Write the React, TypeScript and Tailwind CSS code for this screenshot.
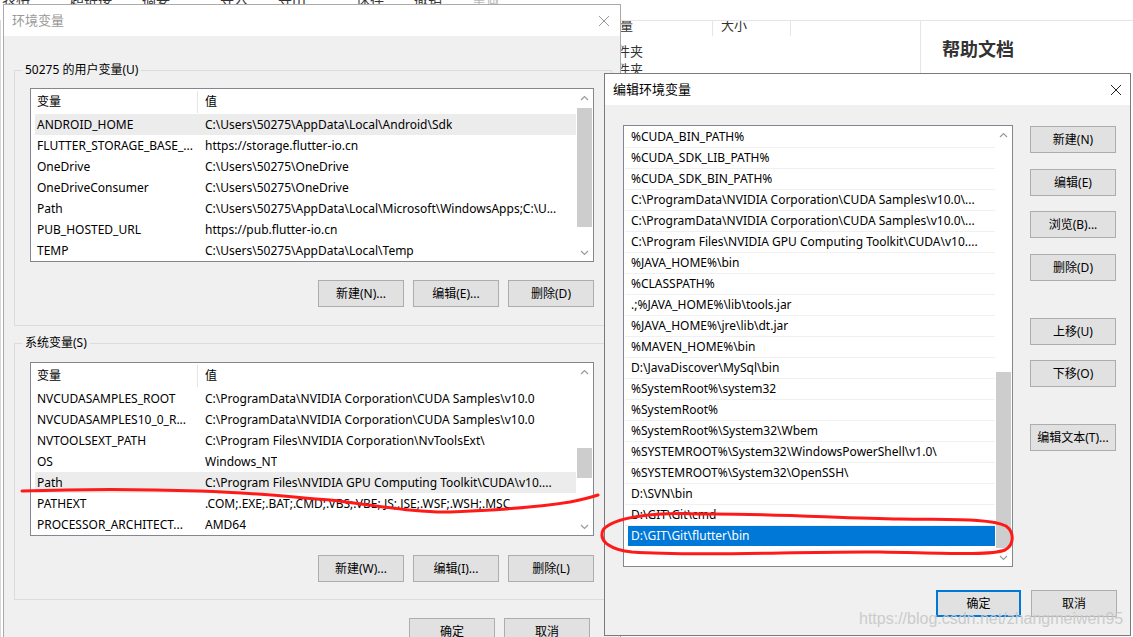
import React from "react";

const userVars: [string, string][] = [
  ["ANDROID_HOME", "C:\\Users\\50275\\AppData\\Local\\Android\\Sdk"],
  ["FLUTTER_STORAGE_BASE_...", "https://storage.flutter-io.cn"],
  ["OneDrive", "C:\\Users\\50275\\OneDrive"],
  ["OneDriveConsumer", "C:\\Users\\50275\\OneDrive"],
  ["Path", "C:\\Users\\50275\\AppData\\Local\\Microsoft\\WindowsApps;C:\\U..."],
  ["PUB_HOSTED_URL", "https://pub.flutter-io.cn"],
  ["TEMP", "C:\\Users\\50275\\AppData\\Local\\Temp"],
];

const sysVars: [string, string][] = [
  ["NVCUDASAMPLES_ROOT", "C:\\ProgramData\\NVIDIA Corporation\\CUDA Samples\\v10.0"],
  ["NVCUDASAMPLES10_0_R...", "C:\\ProgramData\\NVIDIA Corporation\\CUDA Samples\\v10.0"],
  ["NVTOOLSEXT_PATH", "C:\\Program Files\\NVIDIA Corporation\\NvToolsExt\\"],
  ["OS", "Windows_NT"],
  ["Path", "C:\\Program Files\\NVIDIA GPU Computing Toolkit\\CUDA\\v10...."],
  ["PATHEXT", ".COM;.EXE;.BAT;.CMD;.VBS;.VBE;.JS;.JSE;.WSF;.WSH;.MSC"],
  ["PROCESSOR_ARCHITECT...", "AMD64"],
];

const paths = [
  "%CUDA_BIN_PATH%",
  "%CUDA_SDK_LIB_PATH%",
  "%CUDA_SDK_BIN_PATH%",
  "C:\\ProgramData\\NVIDIA Corporation\\CUDA Samples\\v10.0\\...",
  "C:\\ProgramData\\NVIDIA Corporation\\CUDA Samples\\v10.0\\...",
  "C:\\Program Files\\NVIDIA GPU Computing Toolkit\\CUDA\\v10....",
  "%JAVA_HOME%\\bin",
  "%CLASSPATH%",
  ".;%JAVA_HOME%\\lib\\tools.jar",
  "%JAVA_HOME%\\jre\\lib\\dt.jar",
  "%MAVEN_HOME%\\bin",
  "D:\\JavaDiscover\\MySql\\bin",
  "%SystemRoot%\\system32",
  "%SystemRoot%",
  "%SystemRoot%\\System32\\Wbem",
  "%SYSTEMROOT%\\System32\\WindowsPowerShell\\v1.0\\",
  "%SYSTEMROOT%\\System32\\OpenSSH\\",
  "D:\\SVN\\bin",
  "D:\\GIT\\Git\\cmd",
  "D:\\GIT\\Git\\flutter\\bin",
];

function Chevron({ up }: { up?: boolean }) {
  return (
    <svg width="9" height="6" viewBox="0 0 9 6">
      <polyline
        points={up ? "1,5 4.5,1.5 8,5" : "1,1 4.5,4.5 8,1"}
        fill="none"
        stroke="#9a9a9a"
        strokeWidth="1.2"
      />
    </svg>
  );
}

function Scroll({ gap, thumb }: { gap: string; thumb: string }) {
  return (
    <div className="flex w-[17px] flex-col bg-white">
      <div className="flex h-[17px] items-center justify-center">
        <Chevron up />
      </div>
      <div className="flex flex-1 flex-col px-[1px]">
        <div className={gap} />
        <div className={thumb} />
      </div>
      <div className="flex h-[17px] items-center justify-center">
        <Chevron />
      </div>
    </div>
  );
}

function CloseX({ color }: { color: string }) {
  return (
    <svg width="12" height="12" viewBox="0 0 12 12">
      <path d="M1 1 L11 11 M11 1 L1 11" stroke={color} strokeWidth="1" fill="none" />
    </svg>
  );
}

function Btn({ label, focused }: { label: string; focused?: boolean }) {
  return (
    <div
      className={
        focused
          ? "flex h-[27px] w-[85px] items-center justify-center border-2 border-[#0078d7] bg-[#e1e1e1] text-[12px] text-black"
          : "flex h-[27px] w-[86px] items-center justify-center border border-[#adadad] bg-[#e1e1e1] text-[12px] text-black"
      }
    >
      {label}
    </div>
  );
}

function VarList({
  rows,
  sel,
  gap,
  thumb,
}: {
  rows: [string, string][];
  sel: number;
  gap: string;
  thumb: string;
}) {
  return (
    <div className="flex h-[174px] w-[564px] border border-[#828790] bg-white text-[12px] text-black">
      <div className="flex min-w-0 flex-1 flex-col">
        <div className="flex h-[25px] items-center">
          <div className="flex h-[22px] w-[167px] items-center border-r border-[#e5e5e5] pl-[6px]">
            变量
          </div>
          <div className="pl-[7px]">值</div>
        </div>
        {rows.map(([k, v], i) => (
          <div
            key={i}
            className={
              i === sel
                ? "ml-[4px] flex h-[21px] items-center bg-[#ececec]"
                : "ml-[4px] flex h-[21px] items-center"
            }
          >
            <div className="w-[163px] shrink-0 overflow-hidden whitespace-nowrap pl-[2px]">{k}</div>
            <div className="overflow-hidden whitespace-nowrap pl-[7px]">{v}</div>
          </div>
        ))}
      </div>
      <Scroll gap={gap} thumb={thumb} />
    </div>
  );
}

function GroupBox({ legend, children, h }: { legend: string; children: React.ReactNode; h: string }) {
  return (
    <div className={`relative ml-[10px] w-[598px] border border-[#dcdcdc] ${h}`}>
      <div className="absolute -top-[9px] left-[7px] bg-[#f0f0f0] px-[3px] text-[12px] leading-[16px] text-black">
        {legend}
      </div>
      {children}
    </div>
  );
}

export default function App() {
  return (
    <div className="relative h-[637px] w-[1133px] overflow-hidden bg-white font-['Noto_Sans','Noto_Sans_CJK_SC',sans-serif]">
      {/* background web page */}
      <div className="absolute left-0 top-[-12px] flex gap-[30px] pl-[2px] text-[14px] text-[#333]">
        <span>表格</span>
        <span className="ml-[10px]">超链接</span>
        <span>摘要</span>
        <span className="ml-[20px]">导入</span>
        <span>导出</span>
        <span className="ml-[20px]">保存</span>
        <span>撤销</span>
        <span className="text-[#bbb]">重做</span>
      </div>
      <div className="absolute left-0 top-[20px] h-[640px] w-[1px] bg-[#d8d8d8]" />
      <div className="absolute left-[600px] top-[20px] flex h-[16px] w-[533px] overflow-hidden border-t border-[#e5e5e5] text-[13px] text-[#333]">
        <div className="w-[113px] border-r border-[#e5e5e5] pl-[20px] leading-[8px]">量</div>
        <div className="w-[78px] border-r border-[#e5e5e5] pl-[8px] leading-[8px]">大小</div>
      </div>
      <div className="absolute left-[920px] top-[20px] h-[60px] w-[1px] bg-[#e5e5e5]" />
      <div className="absolute left-[604px] top-[42px] text-[13px] leading-[18px] text-[#333]">
        <div>文件夹</div>
        <div>文件夹</div>
      </div>
      <div className="absolute left-[942px] top-[36px] text-[18px] font-bold text-[#333]">帮助文档</div>

      {/* Left dialog: 环境变量 */}
      <div className="absolute left-[3px] top-[4px] flex h-[660px] w-[618px] flex-col border border-[#aaaaaa] bg-[#f0f0f0]">
        <div className="flex h-[31px] items-center justify-between bg-white pl-[8px] pr-[10px]">
          <span className="text-[13px] text-[#999]">环境变量</span>
          <CloseX color="#999" />
        </div>
        <div className="mt-[34px]">
          <GroupBox legend="50275 的用户变量(U)" h="h-[256px]">
            <div className="pl-[15px] pt-[17px]">
              <VarList rows={userVars} sel={0} gap="h-[2px]" thumb="h-[119px] bg-[#cdcdcd]" />
              <div className="mt-[18px] flex w-[564px] justify-end gap-[9px]">
                <Btn label="新建(N)..." />
                <Btn label="编辑(E)..." />
                <Btn label="删除(D)" />
              </div>
            </div>
          </GroupBox>
        </div>
        <div className="mt-[17px]">
          <GroupBox legend="系统变量(S)" h="h-[257px]">
            <div className="pl-[15px] pt-[18px]">
              <VarList rows={sysVars} sel={4} gap="h-[68px]" thumb="h-[30px] bg-[#cdcdcd]" />
              <div className="mt-[19px] flex w-[564px] justify-end gap-[9px]">
                <Btn label="新建(W)..." />
                <Btn label="编辑(I)..." />
                <Btn label="删除(L)" />
              </div>
            </div>
          </GroupBox>
        </div>
        <div className="mt-[18px] flex justify-end gap-[9px] pr-[30px]">
          <Btn label="确定" />
          <Btn label="取消" />
        </div>
      </div>

      {/* Right dialog: 编辑环境变量 */}
      <div className="absolute left-[604px] top-[73px] flex h-[563px] w-[527px] flex-col border border-[#7a7a7a] bg-[#f0f0f0] text-[12px] text-black">
        <div className="flex h-[31px] items-center justify-between bg-white pl-[8px] pr-[8px]">
          <span className="text-[13px] text-black">编辑环境变量</span>
          <CloseX color="#222" />
        </div>
        <div className="flex pl-[18px] pt-[20px]">
          <div className="flex h-[442px] w-[390px] border border-[#828790] bg-white">
            <div className="flex min-w-0 flex-1 flex-col pl-[1px] pt-[1px]">
              {paths.map((p, i) =>
                i === paths.length - 1 ? (
                  <div key={i} className="ml-[3px] flex h-[21px] items-center border-b border-white">
                    <div className="flex h-[20px] flex-1 items-center bg-[#0078d7] pl-[3px] text-white">{p}</div>
                  </div>
                ) : (
                  <div
                    key={i}
                    className="flex h-[21px] items-center overflow-hidden whitespace-nowrap border-b border-[#f0f0f0] pl-[6px]"
                  >
                    {p}
                  </div>
                )
              )}
            </div>
            <Scroll gap="h-[229px]" thumb="h-[176px] bg-[#cdcdcd]" />
          </div>
          <div className="ml-[17px] flex flex-col">
            <div className="mt-[1px]">
              <Btn label="新建(N)" />
            </div>
            <div className="mt-[16px]">
              <Btn label="编辑(E)" />
            </div>
            <div className="mt-[15px]">
              <Btn label="浏览(B)..." />
            </div>
            <div className="mt-[16px]">
              <Btn label="删除(D)" />
            </div>
            <div className="mt-[37px]">
              <Btn label="上移(U)" />
            </div>
            <div className="mt-[15px]">
              <Btn label="下移(O)" />
            </div>
            <div className="mt-[37px]">
              <Btn label="编辑文本(T)..." />
            </div>
          </div>
        </div>
        <div className="mt-[23px] flex justify-end gap-[10px] pr-[13px]">
          <Btn label="确定" focused />
          <Btn label="取消" />
        </div>
      </div>

      {/* watermark */}
      <div className="pointer-events-none absolute left-[859px] top-[607px] font-['Liberation_Sans',sans-serif] text-[16px] text-[#c8c8c8] opacity-90">
        https://blog.csdn.net/zhangmeiwen95
      </div>

      {/* red annotations */}
      <svg className="pointer-events-none absolute left-0 top-0" width="1133" height="637" viewBox="0 0 1133 637">
        <path
          d="M22 491 C 80 489, 140 489, 200 491 C 260 493, 290 497, 330 500 C 380 506, 420 513, 450 512 C 500 510, 540 507, 570 502 C 585 499, 592 497, 598 495"
          fill="none"
          stroke="#ff1a1a"
          strokeWidth="3"
          strokeLinecap="round"
        />
        <path
          d="M700 514 C 650 512, 612 518, 603 530 C 598 542, 612 550, 632 552 C 700 557, 800 551, 880 552 C 940 553, 990 556, 1005 550 C 1015 544, 1014 532, 1006 526 C 990 518, 950 520, 900 519 C 840 518, 760 513, 700 514"
          fill="none"
          stroke="#ff1a1a"
          strokeWidth="3"
          strokeLinecap="round"
        />
      </svg>
    </div>
  );
}
